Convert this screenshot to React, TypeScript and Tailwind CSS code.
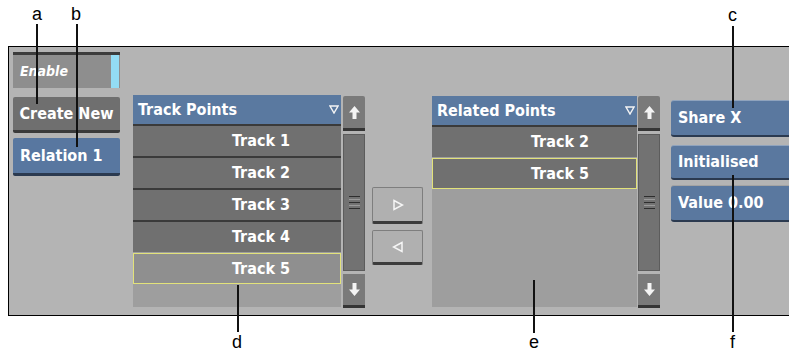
const FONT = { fontFamily: '"DejaVu Sans Condensed", "DejaVu Sans", sans-serif', fontStretch: "condensed" };

const ArrowUp = () => (
  <svg width="11" height="15" viewBox="0 0 11 15">
    <path d="M5.5 1 L11 7.5 H7.5 V14 H3.5 V7.5 H0 Z" fill="#f4f4f4" />
  </svg>
);

const ArrowDown = () => (
  <svg width="11" height="15" viewBox="0 0 11 15">
    <path d="M5.5 14 L11 7.5 H7.5 V1 H3.5 V7.5 H0 Z" fill="#f4f4f4" />
  </svg>
);

const Grip = () => (
  <div className="flex w-[11px] flex-col gap-[2px]">
    <div className="h-[1px] bg-[#2e2e2e]" />
    <div className="h-[1px] bg-[#9a9a9a]" />
    <div className="h-[1px] bg-[#2e2e2e]" />
    <div className="h-[1px] bg-[#9a9a9a]" />
    <div className="h-[1px] bg-[#2e2e2e]" />
  </div>
);

const ScrollBar = () => (
  <div className="flex h-full w-[22px] flex-col">
    <div className="flex h-[35px] items-center justify-center rounded-t-[2px] border-b-[3px] border-[#353535] bg-[#7a7a7a]">
      <ArrowUp />
    </div>
    <div className="mt-[3px] flex flex-1 items-center justify-center border border-[#5c5c5c] bg-[#727272]">
      <Grip />
    </div>
    <div className="mt-[3px] flex h-[34px] items-center justify-center border-b-[3px] border-[#353535] bg-[#7a7a7a]">
      <ArrowDown />
    </div>
  </div>
);

const HeaderTriangle = () => (
  <svg width="10" height="9" viewBox="0 0 10 9">
    <path d="M1 1 H9 L5 8 Z" fill="none" stroke="#f4f4f4" strokeWidth="1.4" />
  </svg>
);

type ListProps = {
  title: string;
  rows: string[];
  selected: string;
  selectedLight?: boolean;
  width: string;
};

const PointList = ({ title, rows, selected, selectedLight, width }: ListProps) => (
  <div className={`flex h-full flex-col bg-[#9e9e9e] ${width}`}>
    <div className="flex h-[29px] items-center justify-between bg-[#5a79a0] pl-[5px] pr-[2px] text-[16px] font-bold text-white">
      <span>{title}</span>
      <HeaderTriangle />
    </div>
    {rows.map((row) =>
      row === selected ? (
        <div
          key={row}
          className={`mt-[1px] flex h-[31px] items-center whitespace-nowrap border border-[#e2e27a] pl-[98px] text-[16px] font-bold text-white ${
            selectedLight ? "bg-[#8f8f8f]" : "bg-[#707070]"
          }`}
        >
          {row}
        </div>
      ) : (
        <div
          key={row}
          className="flex h-[32px] items-center whitespace-nowrap border-t-2 border-[#3a3a3a] bg-[#707070] pl-[99px] text-[16px] font-bold text-white"
        >
          {row}
        </div>
      )
    )}
  </div>
);

const MoveButton = ({ dir, className }: { dir: "right" | "left"; className: string }) => (
  <div
    className={`flex w-[51px] items-center justify-center rounded-[2px] border border-[#7e7e7e] border-b-[3px] border-b-[#3c3c3c] bg-[#b0b0b0] ${className}`}
  >
    <svg width="12" height="12" viewBox="0 0 12 12">
      {dir === "right" ? (
        <path d="M2 1.5 L10.5 6 L2 10.5 Z" fill="none" stroke="#f6f6f6" strokeWidth="1.5" />
      ) : (
        <path d="M10 1.5 L1.5 6 L10 10.5 Z" fill="none" stroke="#f6f6f6" strokeWidth="1.5" />
      )}
    </svg>
  </div>
);

const BlueButton = ({ label, className }: { label: string; className: string }) => (
  <div
    className={`flex items-center rounded-l-[3px] border-t border-[#8fa3bd] border-b-2 border-b-[#2b3a50] bg-[#5a789f] pl-[7px] text-[16px] font-bold text-white ${className}`}
  >
    {label}
  </div>
);

const Callout = ({ x, top, height }: { x: string; top: string; height: string }) => (
  <div className={`absolute w-[2px] bg-[#111] ${x} ${top} ${height}`} />
);

const Letter = ({ text, className }: { text: string; className: string }) => (
  <span
    className={`absolute text-[18px] leading-none text-black ${className}`}
    style={{ fontFamily: '"Liberation Sans", Arial, sans-serif' }}
  >
    {text}
  </span>
);

export default function App() {
  return (
    <div className="relative h-[353px] w-[789px] overflow-hidden bg-white" style={FONT}>
      <div className="ml-[8px] mt-[46px] flex h-[270px] w-[781px] items-start border-y border-l border-black bg-[#b4b4b4] pl-[4px] pt-[5px]">
        {/* left column */}
        <div className="flex w-[107px] flex-col">
          <div className="flex h-[36px] items-stretch border-t-[3px] border-[#3c3c3c] bg-[#8e8e8e]">
            <span className="flex flex-1 items-center pl-[7px] text-[14px] font-bold italic text-white">
              Enable
            </span>
            <div className="mr-[1px] w-[8px] bg-[#93dcf4]" />
          </div>
          <div className="mt-[9px] flex h-[36px] items-center justify-center rounded-[2px] border-b-[3px] border-[#3a3a3a] bg-[#6f6f6f] text-[16px] font-bold text-white">
            Create New
          </div>
          <div className="mt-[5px] flex h-[38px] items-center rounded-[2px] border-b-[3px] border-[#2b3a50] bg-[#5877a0] pl-[7px] text-[16px] font-bold text-white">
            Relation 1
          </div>
        </div>

        {/* track points */}
        <div className="ml-[13px] mt-[43px] h-[212px]">
          <PointList
            title="Track Points"
            rows={["Track 1", "Track 2", "Track 3", "Track 4", "Track 5"]}
            selected="Track 5"
            selectedLight
            width="w-[208px]"
          />
        </div>
        <div className="ml-[2px] mt-[44px] h-[212px]">
          <ScrollBar />
        </div>

        {/* move buttons */}
        <div className="ml-[7px] mt-[135px] flex flex-col">
          <MoveButton dir="right" className="h-[37px]" />
          <MoveButton dir="left" className="mt-[6px] h-[35px]" />
        </div>

        {/* related points */}
        <div className="ml-[9px] mt-[44px] h-[211px]">
          <PointList
            title="Related Points"
            rows={["Track 2", "Track 5"]}
            selected="Track 5"
            width="w-[205px]"
          />
        </div>
        <div className="ml-[1px] mt-[44px] h-[212px]">
          <ScrollBar />
        </div>

        {/* right column */}
        <div className="ml-[11px] mt-[48px] flex flex-1 flex-col">
          <BlueButton label="Share X" className="h-[37px]" />
          <BlueButton label="Initialised" className="mt-[8px] h-[35px]" />
          <BlueButton label="Value 0.00" className="mt-[5px] h-[37px] border-t-[#a3a3a3]" />
        </div>
      </div>

      {/* callouts */}
      <Letter text="a" className="left-[32px] top-[5px]" />
      <Letter text="b" className="left-[71px] top-[5px]" />
      <Letter text="c" className="left-[728px] top-[6px]" />
      <Letter text="d" className="left-[232px] top-[333px]" />
      <Letter text="e" className="left-[529px] top-[333px]" />
      <Letter text="f" className="left-[730px] top-[333px]" />
      <Callout x="left-[36px]" top="top-[24px]" height="h-[80px]" />
      <Callout x="left-[76px]" top="top-[24px]" height="h-[123px]" />
      <Callout x="left-[732px]" top="top-[26px]" height="h-[82px]" />
      <Callout x="left-[237px]" top="top-[285px]" height="h-[47px]" />
      <Callout x="left-[533px]" top="top-[280px]" height="h-[53px]" />
      <Callout x="left-[732px]" top="top-[175px]" height="h-[157px]" />
    </div>
  );
}
